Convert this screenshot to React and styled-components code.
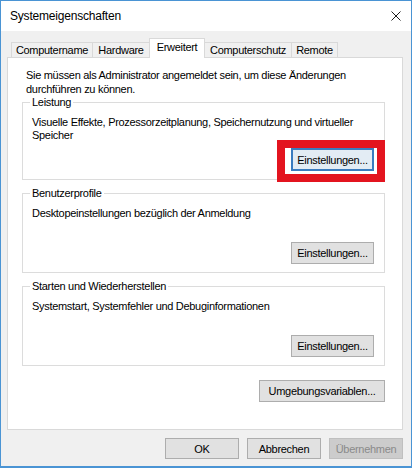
import styled, { createGlobalStyle } from "styled-components";

const GlobalStyle = createGlobalStyle`
  html, body {
    margin: 0;
    padding: 0;
    background: #ffffff;
  }
  body {
    font-family: "Liberation Sans", Arial, sans-serif;
    font-size: 11px;
    letter-spacing: -0.3px;
    color: #000000;
  }
  * {
    box-sizing: border-box;
  }
`;

const Window = styled.div`
  width: 412px;
  height: 468px;
  display: flex;
  flex-direction: column;
  border: 1px solid #4a94d4;
  border-bottom-width: 2px;
  background: #f0f0f0;
`;

const TitleBar = styled.div`
  height: 30px;
  flex: none;
  display: flex;
  align-items: center;
  justify-content: space-between;
  padding: 0 10px 0 9px;
  background: #ffffff;
  font-size: 12px;
  letter-spacing: -0.2px;
`;

const CloseIcon = styled.svg`
  width: 10px;
  height: 10px;
  display: block;
`;

const Body = styled.div`
  flex: 1;
  display: flex;
  flex-direction: column;
  padding: 7px 8px 7px 6px;
`;

const TabRow = styled.div`
  display: flex;
  align-items: flex-end;
  height: 19px;
  padding-left: 4px;
  position: relative;
  z-index: 1;
`;

const Tab = styled.div`
  width: ${({ $w }) => $w}px;
  height: ${({ $active }) => ($active ? 20 : 15)}px;
  margin-left: -1px;
  margin-bottom: ${({ $active }) => ($active ? -1 : 0)}px;
  padding-top: ${({ $active }) => ($active ? 2 : 1)}px;
  border: 1px solid #d9d9d9;
  border-bottom: none;
  background: ${({ $active }) => ($active ? "#ffffff" : "#f0f0f0")};
  text-align: center;
  line-height: 13px;
  white-space: nowrap;
  position: relative;
  z-index: ${({ $active }) => ($active ? 2 : 1)};

  &:first-child {
    margin-left: 0;
  }
`;

const Panel = styled.div`
  flex: 1;
  display: flex;
  flex-direction: column;
  background: #ffffff;
  border: 1px solid #d9d9d9;
  padding: 10px 17px 0 14px;
`;

const Intro = styled.p`
  margin: 0 4px;
  line-height: 14px;
  white-space: nowrap;
`;

const Groups = styled.div`
  display: flex;
  flex-direction: column;
  gap: 7px;
`;

const Group = styled.fieldset`
  margin: 0;
  min-inline-size: auto;
  border: 1px solid #dcdcdc;
  padding: 7px 10px 8px 9px;
`;

const Legend = styled.legend`
  margin-left: -2px;
  padding: 0 2px;
  line-height: 13px;
`;

const GroupBody = styled.div`
  height: ${({ $h }) => $h}px;
  display: flex;
  flex-direction: column;
  justify-content: space-between;
`;

const Desc = styled.div`
  line-height: 13px;
  white-space: nowrap;
`;

const ButtonRow = styled.div`
  display: flex;
  justify-content: flex-end;
  gap: ${({ $gap }) => $gap || 0}px;
  margin-top: ${({ $top }) => $top || 0}px;
`;

const ButtonWrap = styled.div`
  position: relative;
`;

const Button = styled.button`
  width: ${({ $w }) => $w}px;
  height: ${({ $h }) => $h || 22}px;
  padding: 0;
  font-family: inherit;
  font-size: 11px;
  letter-spacing: -0.3px;
  color: ${({ disabled }) => (disabled ? "#8a8a8a" : "#000000")};
  background: ${({ disabled, $focus }) =>
    disabled ? "#cccccc" : $focus ? "#e3ecf4" : "#e1e1e1"};
  border: ${({ $focus }) => ($focus ? 2 : 1)}px solid
    ${({ disabled, $focus }) =>
      disabled ? "#bfbfbf" : $focus ? "#3a7cbf" : "#adadad"};
  border-radius: 0;
`;

const Highlight = styled.div`
  position: absolute;
  top: -8px;
  left: -14px;
  right: -11px;
  bottom: -11px;
  border: 8px solid #e3141f;
  pointer-events: none;
`;

const tabs = [
  { label: "Computername", w: 82 },
  { label: "Hardware", w: 58 },
  { label: "Erweitert", w: 56, active: true },
  { label: "Computerschutz", w: 88 },
  { label: "Remote", w: 47 },
];

export default function App() {
  return (
    <>
      <GlobalStyle />
      <Window>
        <TitleBar>
          <span>Systemeigenschaften</span>
          <CloseIcon viewBox="0 0 10 10">
            <path d="M0.5 0.5 L9.5 9.5 M9.5 0.5 L0.5 9.5" stroke="#1e1e1e" strokeWidth="1" fill="none" />
          </CloseIcon>
        </TitleBar>
        <Body>
          <TabRow>
            {tabs.map((t) => (
              <Tab key={t.label} $w={t.w} $active={t.active}>
                {t.label}
              </Tab>
            ))}
          </TabRow>
          <Panel>
            <Intro>
              Sie müssen als Administrator angemeldet sein, um diese Änderungen
              <br />
              durchführen zu können.
            </Intro>
            <Groups>
              <Group>
                <Legend>Leistung</Legend>
                <GroupBody $h={55}>
                  <Desc>
                    Visuelle Effekte, Prozessorzeitplanung, Speichernutzung und virtueller
                    <br />
                    Speicher
                  </Desc>
                  <ButtonRow>
                    <ButtonWrap>
                      <Button $w={83} $h={23} $focus>
                        Einstellungen...
                      </Button>
                      <Highlight />
                    </ButtonWrap>
                  </ButtonRow>
                </GroupBody>
              </Group>
              <Group>
                <Legend>Benutzerprofile</Legend>
                <GroupBody $h={57}>
                  <Desc>Desktopeinstellungen bezüglich der Anmeldung</Desc>
                  <ButtonRow>
                    <Button $w={83}>Einstellungen...</Button>
                  </ButtonRow>
                </GroupBody>
              </Group>
              <Group>
                <Legend>Starten und Wiederherstellen</Legend>
                <GroupBody $h={57}>
                  <Desc>Systemstart, Systemfehler und Debuginformationen</Desc>
                  <ButtonRow>
                    <Button $w={83}>Einstellungen...</Button>
                  </ButtonRow>
                </GroupBody>
              </Group>
            </Groups>
            <ButtonRow $top={14}>
              <Button $w={126}>Umgebungsvariablen...</Button>
            </ButtonRow>
          </Panel>
          <ButtonRow $top={8} $gap={8}>
            <Button $w={74} $h={21}>OK</Button>
            <Button $w={74} $h={21}>Abbrechen</Button>
            <Button $w={74} $h={21} disabled>
              Übernehmen
            </Button>
          </ButtonRow>
        </Body>
      </Window>
    </>
  );
}
